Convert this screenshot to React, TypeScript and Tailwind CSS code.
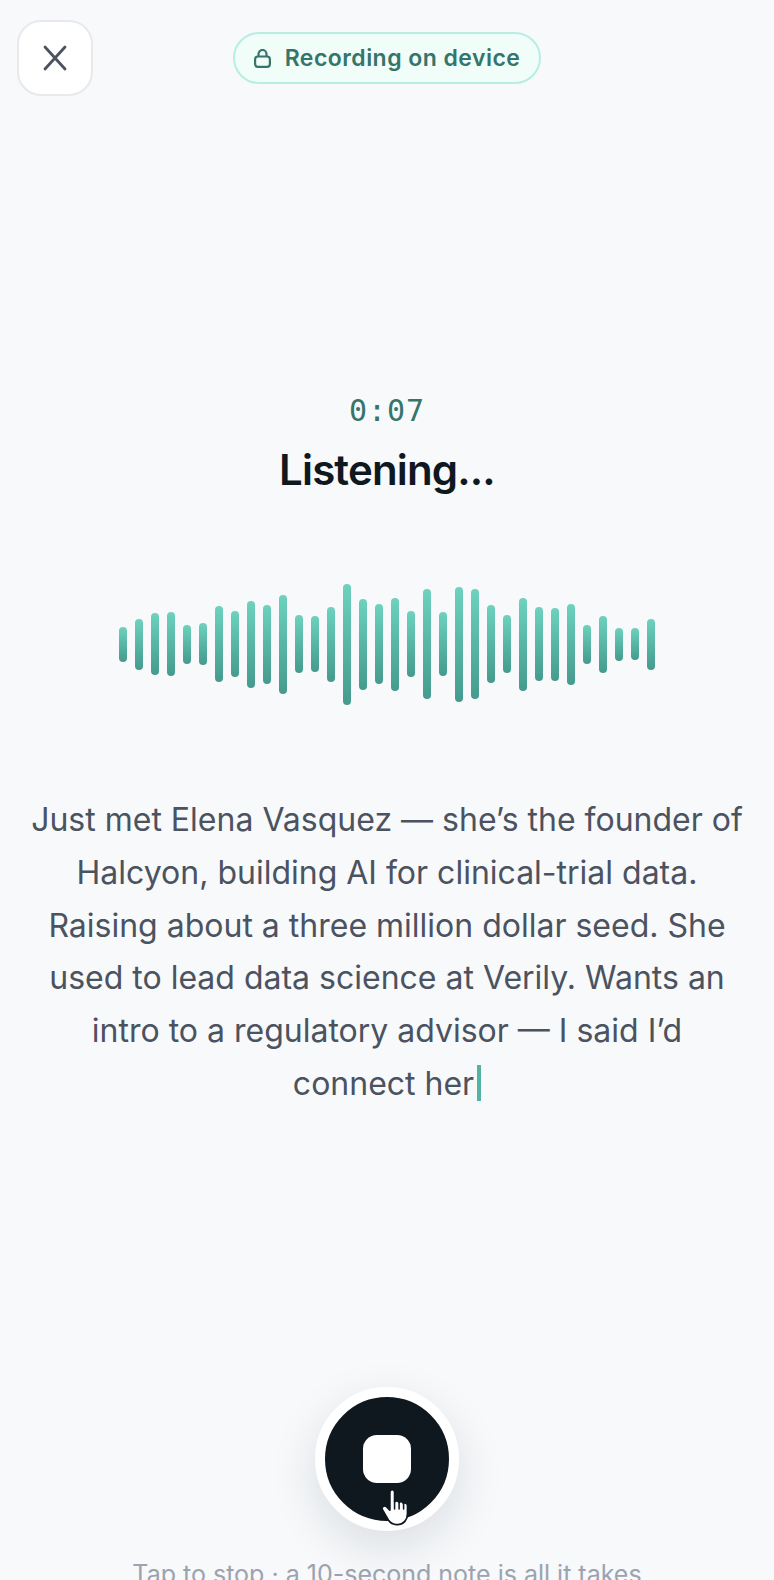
const bars = [
  35, 51, 62, 64, 39, 42, 76, 66, 87, 79, 99, 58, 56, 75, 121, 91, 80, 93, 66, 110, 64, 115, 110, 78, 58, 93, 74, 73, 81,
  39, 57, 33, 32, 51,
];

function Waveform() {
  return (
    <div className="flex h-[124px] items-center justify-center gap-2">
      {bars.map((h, i) => (
        <div key={i} className="w-2 rounded-full bg-gradient-to-b from-[#6dd2be] to-[#459a8e]" style={{ height: h }} />
      ))}
    </div>
  );
}

function HandCursor() {
  return (
    <svg className="absolute left-[65px] top-[102px] h-[38px] w-[31px]" viewBox="0 0 29 37" fill="none">
      <path
        d="M9 3c0-1.500 1-2.400 2.300-2.400S13.600 1.500 13.600 3v9.500c.5-.6 1.200-.9 2-.9 1.100 0 2 .6 2.300 1.600.4-.5 1.100-.8 1.900-.8 1.100 0 2 .7 2.300 1.700.4-.3.9-.5 1.500-.5 1.500 0 2.600 1.200 2.600 2.800v7.800c0 5.800-3.800 10.400-9.300 10.400h-1.400c-3.700 0-6-1.500-8-4.400L2 20.600c-.9-1.300-.7-2.800.4-3.600 1.100-.8 2.500-.6 3.500.5L9 20.500V3z"
        fill="#fff"
        stroke="#0f1720"
        strokeWidth="1.700"
        strokeLinejoin="round"
      />
      <path d="M13.600 12.500v7M18 13.500v6M22.400 14.500v5" stroke="#0f1720" strokeWidth="1.500" strokeLinecap="round" />
    </svg>
  );
}

export default function App() {
  return (
    <div className="flex h-[1580px] flex-col overflow-hidden bg-[#f7f9fb] font-['Inter',sans-serif]">
      {/* HEADER */}
      <header className="grid grid-cols-[1fr_auto_1fr] items-center px-[17px] pt-5">
        <button className="flex h-[76px] w-[76px] items-center justify-center rounded-3xl border-2 border-[#e7e9ec] bg-white text-[#4b5260]">
          <svg width="32" height="32" viewBox="0 0 32 32" fill="none" stroke="currentColor" strokeWidth="2.800" strokeLinecap="round">
            <path d="M6 5l20 22M26 5L6 27" />
          </svg>
        </button>
        <div className="flex h-[52px] items-center gap-[14px] rounded-full border-2 border-[#b8eee2] bg-[#f0fdf9] px-[19px] text-[23px] font-semibold tracking-[0.46px] text-[#35756a]">
          <svg width="17" height="19" viewBox="0 0 17 19" fill="none" stroke="currentColor" strokeWidth="2.200">
            <rect x="1.100" y="7.500" width="14.800" height="10.400" rx="2.800" />
            <path d="M4.500 7.500V5a4 4 0 0 1 8 0v2.500" />
          </svg>
          <span className="mt-px">Recording on device</span>
        </div>
        <div />
      </header>

      {/* STATUS */}
      <section className="mt-[297px] flex flex-col items-center">
        <div className="font-['DejaVu_Sans_Mono',monospace] text-[30px] leading-9 tracking-[1px] text-[#35756a]">0:07</div>
        <h1 className="mt-[11px] text-[42px] leading-[60px] font-semibold tracking-[-0.84px] text-[#10181f]">Listening...</h1>
      </section>

      <section className="mt-[82px]">
        <Waveform />
      </section>

      {/* TRANSCRIPT */}
      <p className="mt-[88px] px-7 text-center text-[32px] leading-[52.8px] text-[#4b5260]">
        Just met Elena Vasquez — she’s the founder of Halcyon, building AI for clinical-trial data. Raising about a three
        million dollar seed. She used to lead data science at Verily. Wants an intro to a regulatory advisor — I said I’d
        connect her
        <span className="ml-[3px] inline-block h-9 w-1 bg-[#52b5a4] align-[-6px]" />
      </p>

      {/* STOP BUTTON */}
      <div className="mt-auto flex flex-col items-center">
        <div className="relative h-[144px] w-[144px]">
          <button className="flex h-full w-full items-center justify-center rounded-full border-[10px] border-white bg-[#10181f] shadow-[0_16px_48px_rgba(16,24,31,0.12)]">
            <span className="h-12 w-12 rounded-[14px] bg-white" />
          </button>
          <HandCursor />
        </div>
        <p className="mt-[27px] h-[22px] text-[25px] leading-8 whitespace-nowrap text-[#9ca3af]">
          Tap to stop · a 10-second note is all it takes
        </p>
      </div>
    </div>
  );
}
